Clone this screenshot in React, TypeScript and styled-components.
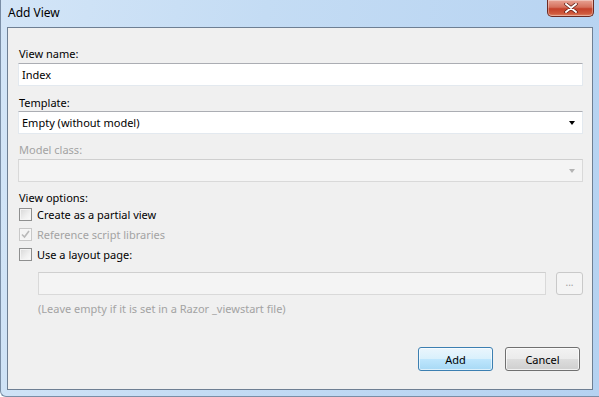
import React from "react";
import styled, { createGlobalStyle } from "styled-components";

const Global = createGlobalStyle`
  html, body { margin: 0; padding: 0; }
  body { width: 599px; height: 397px; overflow: hidden; font-family: "Noto Sans", "Open Sans", sans-serif; font-size: 11px; }
`;

const Window = styled.div`
  width: 599px;
  height: 397px;
  box-sizing: border-box;
  display: flex;
  flex-direction: column;
  background: linear-gradient(100deg, #d3e5f7 0%, #c4dcf4 40%, #b5d2f1 100%);
  border-left: 1px solid #7a8ea6;
  border-bottom: 1px solid #7a8ea6;
  border-bottom-left-radius: 6px;
`;

const TitleBar = styled.div`
  height: 27px;
  flex: none;
  display: flex;
  align-items: flex-start;
  justify-content: space-between;
  padding-left: 7px;
  padding-right: 5px;
`;

const Title = styled.div`
  color: #000;
  font-size: 12px;
  line-height: 15px;
  margin-top: 5px;
`;

const CloseButton = styled.div`
  width: 47px;
  height: 17px;
  box-sizing: border-box;
  border: 1px solid #6d2a22;
  border-top: none;
  border-radius: 0 0 5px 5px;
  background: linear-gradient(#e8a294 0%, #d5705c 45%, #c4402a 55%, #cf5a3d 85%, #e0896a 100%);
  display: flex;
  align-items: center;
  justify-content: center;
  box-shadow: inset 0 0 0 1px rgba(255,255,255,0.35);
`;

const Panel = styled.div`
  flex: 1;
  margin: 0 6px 6px 6px;
  background: #f0f0f0;
  border: 1px solid #6e7f93;
  display: flex;
  flex-direction: column;
  padding: 18px 9px 0 10px;
`;

const Label = styled.div<{ $disabled?: boolean; $top?: number }>`
  color: ${(p) => (p.$disabled ? "#a3a3a3" : "#000")};
  line-height: 15px;
  height: 15px;
  padding-left: 1px;
  margin-top: ${(p) => p.$top ?? 0}px;
`;

const TextBox = styled.div<{ $disabled?: boolean; $top?: number }>`
  height: 23px;
  box-sizing: border-box;
  background: ${(p) => (p.$disabled ? "#f4f4f4" : "#fff")};
  border: 1px solid ${(p) => (p.$disabled ? "#d9d9d9" : "#e3e9ef")};
  border-top-color: ${(p) => (p.$disabled ? "#cfcfcf" : "#abadb3")};
  margin-top: ${(p) => p.$top ?? 0}px;
  display: flex;
  align-items: center;
  justify-content: space-between;
  padding: 0 7px 0 3px;
  color: #000;
  line-height: 15px;
`;

const Arrow = styled.div<{ $disabled?: boolean }>`
  width: 0;
  height: 0;
  border-left: 3.5px solid transparent;
  border-right: 3.5px solid transparent;
  border-top: 4px solid ${(p) => (p.$disabled ? "#b4b4b4" : "#000")};
  margin-top: 1px;
`;

const CheckRow = styled.div<{ $disabled?: boolean; $top?: number }>`
  display: flex;
  align-items: center;
  gap: 5px;
  height: 20px;
  margin-top: ${(p) => p.$top ?? 0}px;
  color: ${(p) => (p.$disabled ? "#a3a3a3" : "#000")};
  padding-left: 1px;
`;

const Box = styled.div<{ $disabled?: boolean }>`
  width: 13px;
  height: 13px;
  box-sizing: border-box;
  border: 1px solid ${(p) => (p.$disabled ? "#c8c8c8" : "#8e8f8f")};
  background: ${(p) =>
    p.$disabled
      ? "#f4f4f4"
      : "linear-gradient(135deg, #d7d7d7 0%, #f0f0f0 60%, #fbfbfb 100%)"};
  box-shadow: inset 0 0 0 1px ${(p) => (p.$disabled ? "#f6f6f6" : "#f4f4f4")};
  display: flex;
  align-items: center;
  justify-content: center;
`;

const LayoutRow = styled.div`
  display: flex;
  align-items: center;
  gap: 10px;
  padding-left: 20px;
  margin-top: 8px;
`;

const LayoutBox = styled(TextBox)`
  flex: 1;
`;

const SmallButton = styled.div`
  width: 27px;
  height: 23px;
  box-sizing: border-box;
  border: 1px solid #c9c9c9;
  border-radius: 3px;
  background: #f4f4f4;
  color: #a0a0a0;
  display: flex;
  align-items: center;
  justify-content: center;
  font-size: 10px;
  padding-bottom: 3px;
`;

const Hint = styled.div`
  color: #a3a3a3;
  line-height: 15px;
  padding-left: 20px;
  margin-top: 6px;
`;

const Footer = styled.div`
  margin-top: auto;
  display: flex;
  justify-content: flex-end;
  gap: 12px;
  padding: 0 3px 18px 0;
`;

const Button = styled.div<{ $primary?: boolean }>`
  width: 75px;
  height: 24px;
  box-sizing: border-box;
  border: 1px solid ${(p) => (p.$primary ? "#3c7fb1" : "#707070")};
  border-radius: 3px;
  background: ${(p) =>
    p.$primary
      ? "linear-gradient(#eaf6fd 0%, #d9f0fc 50%, #bee6fd 51%, #a7d9f5 100%)"
      : "linear-gradient(#f2f2f2 0%, #ebebeb 50%, #dddddd 51%, #cfcfcf 100%)"};
  box-shadow: inset 0 0 0 1px ${(p) => (p.$primary ? "rgba(255,255,255,0.6)" : "rgba(255,255,255,0.7)")};
  display: flex;
  align-items: center;
  justify-content: center;
  color: #000;
`;

const Check = () => (
  <svg width="9" height="9" viewBox="0 0 9 9">
    <path d="M1 4.5 L3.5 7 L8 1" fill="none" stroke="#b9b9b9" strokeWidth="1.6" />
  </svg>
);

const XIcon = () => (
  <svg width="14" height="10" viewBox="0 0 14 10">
    <path d="M2 1 L12 9 M12 1 L2 9" stroke="#5a1a12" strokeWidth="3.4" strokeLinecap="round" />
    <path d="M2 1 L12 9 M12 1 L2 9" stroke="#ffffff" strokeWidth="2" strokeLinecap="round" />
  </svg>
);

export default function App() {
  return (
    <>
      <Global />
      <Window>
        <TitleBar>
          <Title>Add View</Title>
          <CloseButton>
            <XIcon />
          </CloseButton>
        </TitleBar>
        <Panel>
          <Label>View name:</Label>
          <TextBox $top={2}>Index</TextBox>
          <Label $top={9}>Template:</Label>
          <TextBox $top={1}>
            Empty (without model)
            <Arrow />
          </TextBox>
          <Label $disabled $top={8}>Model class:</Label>
          <TextBox $disabled $top={2}>
            <span />
            <Arrow $disabled />
          </TextBox>
          <Label $top={8}>View options:</Label>
          <CheckRow $top={-1}>
            <Box />
            Create as a partial view
          </CheckRow>
          <CheckRow $disabled>
            <Box $disabled>
              <Check />
            </Box>
            Reference script libraries
          </CheckRow>
          <CheckRow>
            <Box />
            Use a layout page:
          </CheckRow>
          <LayoutRow>
            <LayoutBox $disabled />
            <SmallButton>...</SmallButton>
          </LayoutRow>
          <Hint>(Leave empty if it is set in a Razor _viewstart file)</Hint>
          <Footer>
            <Button $primary>Add</Button>
            <Button>Cancel</Button>
          </Footer>
        </Panel>
      </Window>
    </>
  );
}
